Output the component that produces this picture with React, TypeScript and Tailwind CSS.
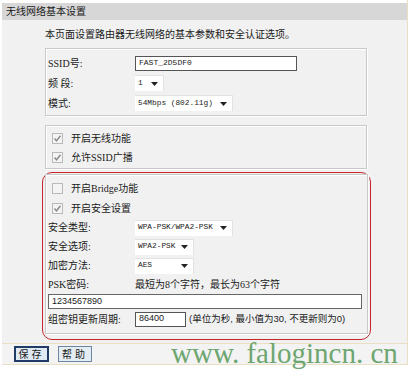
import React from 'react';

function Check({ checked }: { checked?: boolean }) {
  return (
    <span className="inline-flex items-center justify-center w-[11px] h-[11px] border border-[#b9b9b9] bg-[#f4f4f4] mr-[8px] shrink-0">
      {checked && (
        <svg width="9" height="9" viewBox="0 0 9 9">
          <path d="M1.5 4.5 L3.5 6.8 L7.5 1.8" fill="none" stroke="#8a8a8a" strokeWidth="1.4" />
        </svg>
      )}
    </span>
  );
}

function Select({ value, width }: { value: string; width: string }) {
  return (
    <div className={`flex items-center justify-between h-[16px] bg-white border-t border-r border-[#e2e2e2] pl-[3px] pr-[5px] ${width}`}>
      <span className="text-[7.8px] font-['Liberation_Mono',monospace] whitespace-pre">{value}</span>
      <svg width="7" height="4" viewBox="0 0 7 4" className="shrink-0">
        <path d="M0 0 H7 L3.5 4 Z" fill="#222" />
      </svg>
    </div>
  );
}

function Row({ label, children, h = 'h-[20px]' }: { label: string; children?: React.ReactNode; h?: string }) {
  return (
    <div className={`flex items-center ${h}`}>
      <div className="w-[89px] pl-[2px] shrink-0">{label}</div>
      {children}
    </div>
  );
}

const box = 'border border-[#c9c9c9] shadow-[inset_1px_1px_0_#fff,1px_1px_0_#fff]';

export default function App() {
  return (
    <div className="w-[413px] h-[371px] bg-white relative overflow-hidden text-[10px] text-[#1a1a1a] font-['Liberation_Serif','Noto_Sans_CJK_SC',serif]">
      <div className="ml-[2px] w-[406px] border-r border-[#e9dfc4]">
        <div className="h-[3px] bg-white" />
        <div className="h-[17px] bg-[#d7d7d7] flex items-center pl-[4px] text-[10px]">无线网络基本设置</div>
        <div className="bg-[#f1f1f1] pl-[43px] pt-[6px] h-[323px]">
          <div className="h-[16px] flex items-center">本页面设置路由器无线网络的基本参数和安全认证选项。</div>

          <div className={`mt-[6px] w-[322px] pt-[4px] pb-[2px] ${box}`}>
            <Row label="SSID号:">
              <div className="w-[162px] h-[15px] bg-white border border-[#555] flex items-center pl-[3px] text-[8px] font-['Liberation_Mono',monospace]">FAST_2D5DF0</div>
            </Row>
            <Row label="频 段:">
              <Select value="1" width="w-[29px]" />
            </Row>
            <Row label="模式:">
              <Select value="54Mbps (802.11g)" width="w-[98px]" />
            </Row>
          </div>

          <div className={`mt-[9px] w-[322px] pt-[3px] pb-[1px] ${box}`}>
            <div className="flex items-center h-[19px] pl-[6px]"><Check checked />开启无线功能</div>
            <div className="flex items-center h-[19px] pl-[6px]"><Check checked />允许SSID广播</div>
          </div>

          <div className="mt-[3px] -ml-[3px] w-[329px] border border-[#c4262c] rounded-[10px] px-[2px] pt-[1px] pb-[5px]">
            <div className={`w-[323px] pt-[3px] pb-[4px] ${box}`}>
              <div className="flex items-center h-[20px] pl-[6px]"><Check />开启Bridge功能</div>
              <div className="flex items-center h-[20px] pl-[6px]"><Check checked />开启安全设置</div>
              <Row label="安全类型:" h="h-[19px]">
                <Select value="WPA-PSK/WPA2-PSK" width="w-[98px]" />
              </Row>
              <Row label="安全选项:" h="h-[19px]">
                <Select value="WPA2-PSK" width="w-[59px]" />
              </Row>
              <Row label="加密方法:" h="h-[19px]">
                <Select value="AES" width="w-[59px]" />
              </Row>
              <Row label="PSK密码:" h="h-[18px]">
                <span>最短为8个字符，最长为63个字符</span>
              </Row>
              <div className="ml-[2px] mt-[1px] w-[314px] h-[15px] bg-white border border-[#666] flex items-center pl-[3px] text-[9px] font-['Liberation_Sans',sans-serif]">1234567890</div>
              <Row label="组密钥更新周期:" h="h-[20px]">
                <div className="w-[51px] h-[15px] bg-white border border-[#555] flex items-center pl-[3px] text-[9px] font-['Liberation_Sans',sans-serif]">86400</div>
                <span className="ml-[3px] text-[9.5px] font-['Liberation_Sans','Noto_Sans_CJK_SC',sans-serif]">(单位为秒, 最小值为30, 不更新则为0)</span>
              </Row>
            </div>
          </div>
        </div>
        <div className="border-t border-[#e9dfc4] bg-[#f3f3f3] h-[21px] flex items-center pl-[12px] gap-[9px]">
          <button className="w-[35px] h-[16px] border-2 border-[#1f3b66] bg-[#dfe9f3] text-[10px] tracking-[3px] flex items-center justify-center">保存</button>
          <button className="w-[34px] h-[16px] border border-[#6f86a3] bg-[#e4ecf4] text-[10px] tracking-[3px] flex items-center justify-center">帮助</button>
        </div>
        <div className="border-t border-[#e9dfc4]" />
      </div>
      <div className="absolute left-[171px] top-[339px] text-[29px] leading-none text-[#5f9e62] opacity-90 font-['Liberation_Serif',serif] whitespace-pre">www. falogincn. cn</div>
    </div>
  );
}
